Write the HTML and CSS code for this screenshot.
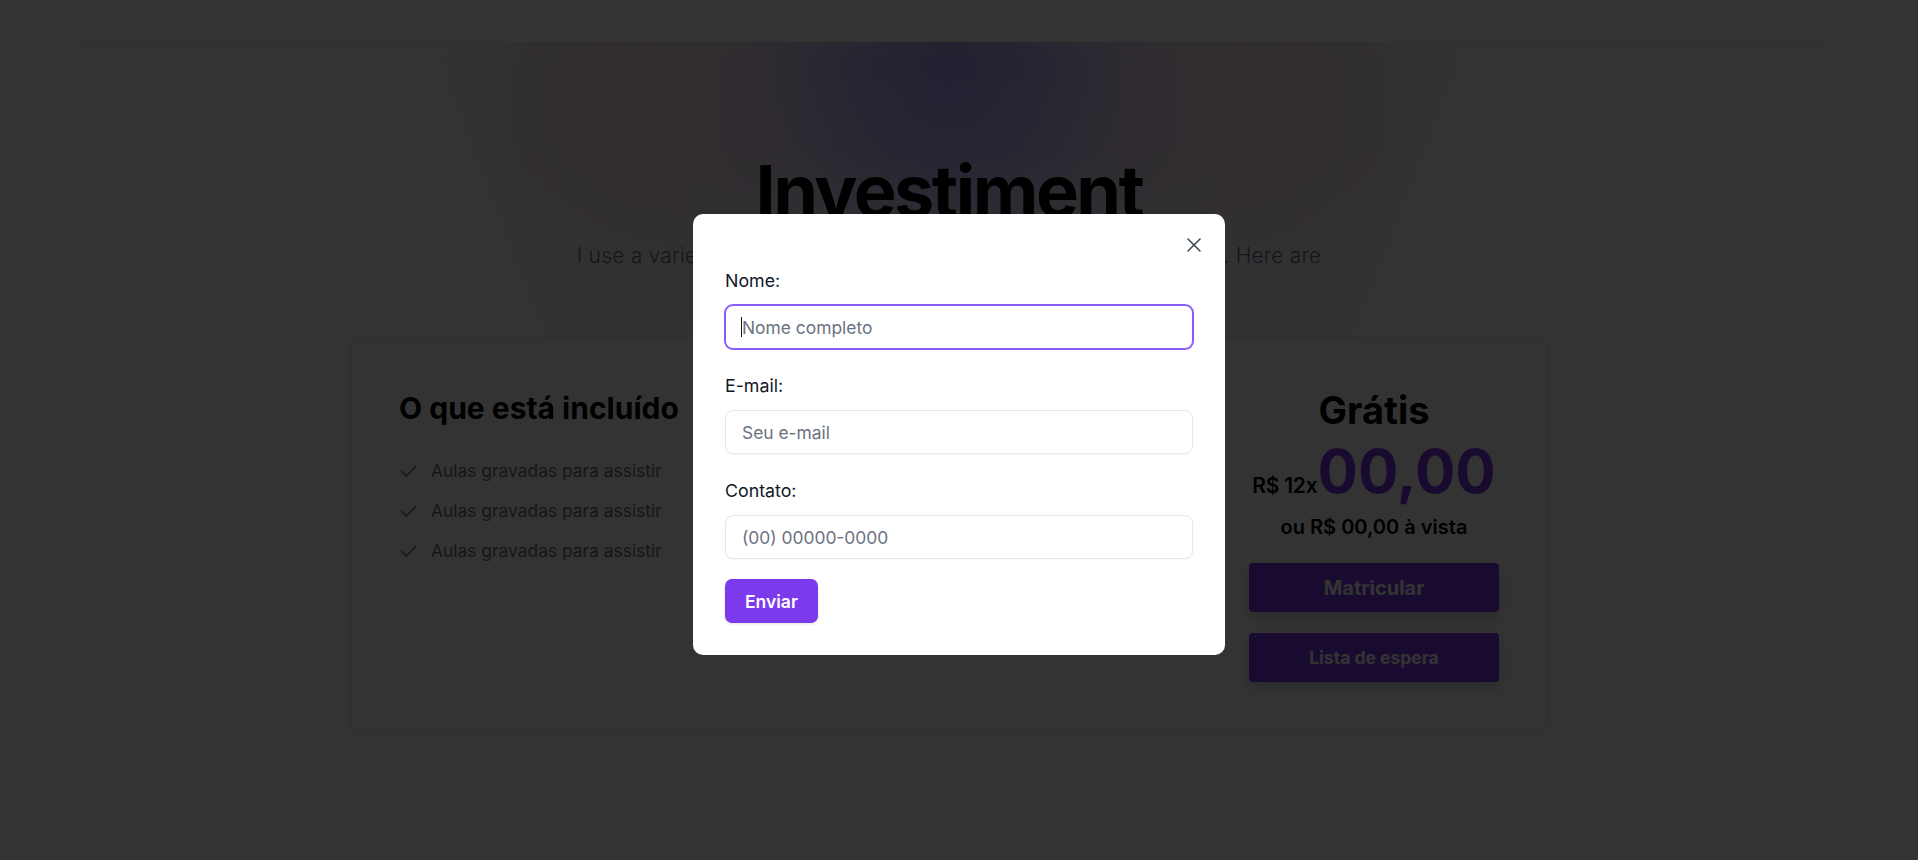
FILE: index.html
```html
<!DOCTYPE html>
<html lang="pt-BR">
<head>
<meta charset="utf-8">
<title>Investiment</title>
<link rel="stylesheet" href="styles.css">
</head>
<body>
<div class="page">
  <header class="topbar"></header>
  <div class="glow" aria-hidden="true"></div>
  <section class="hero">
    <h1 class="hero-title">Investiment</h1>
    <p class="hero-sub">I use a variety of tools and technologies to build my own projects. Here are</p>
  </section>

  <section class="card">
    <div class="included">
      <h2 class="included-title">O que está incluído</h2>
      <ul class="features">
        <li class="feature">
          <svg class="check" width="16" height="12" viewBox="0 0 16 12" fill="none"><polyline points="15,1 5.5,11 1,6.5" stroke="currentColor" stroke-width="1.5" stroke-linecap="round" stroke-linejoin="round"/></svg>
          <span>Aulas gravadas para assistir</span>
        </li>
        <li class="feature">
          <svg class="check" width="16" height="12" viewBox="0 0 16 12" fill="none"><polyline points="15,1 5.5,11 1,6.5" stroke="currentColor" stroke-width="1.5" stroke-linecap="round" stroke-linejoin="round"/></svg>
          <span>Aulas gravadas para assistir</span>
        </li>
        <li class="feature">
          <svg class="check" width="16" height="12" viewBox="0 0 16 12" fill="none"><polyline points="15,1 5.5,11 1,6.5" stroke="currentColor" stroke-width="1.5" stroke-linecap="round" stroke-linejoin="round"/></svg>
          <span>Aulas gravadas para assistir</span>
        </li>
      </ul>
    </div>
    <div class="pricing">
      <div class="plan">Grátis</div>
      <div class="price-row">
        <span class="price-prefix">R$ 12x</span><span class="price">00,00</span>
      </div>
      <div class="price-alt">ou R$ 00,00 à vista</div>
      <button class="btn-primary btn-enroll" type="button">Matricular</button>
      <button class="btn-primary btn-wait" type="button">Lista de espera</button>
    </div>
  </section>
</div>

<div class="overlay">
  <div class="modal" role="dialog">
    <button class="close" type="button" aria-label="Fechar">
      <svg width="24" height="24" viewBox="0 0 24 24" fill="none" stroke="currentColor" stroke-width="1.5" stroke-linecap="round"><path d="M18 6 6 18"/><path d="m6 6 12 12"/></svg>
    </button>
    <form class="form">
      <div class="field">
        <label class="label" for="nome">Nome:</label>
        <div class="input-wrap">
          <input class="input is-focused" id="nome" type="text" placeholder="Nome completo">
          <span class="caret" aria-hidden="true"></span>
        </div>
      </div>
      <div class="field">
        <label class="label" for="email">E-mail:</label>
        <input class="input" id="email" type="email" placeholder="Seu e-mail">
      </div>
      <div class="field">
        <label class="label" for="contato">Contato:</label>
        <input class="input" id="contato" type="tel" placeholder="(00) 00000-0000">
      </div>
      <div class="actions">
        <button class="submit" type="button">Enviar</button>
      </div>
    </form>
  </div>
</div>
</body>
</html>
```

FILE: styles.css
```css
* { box-sizing: border-box; }

html, body {
  margin: 0;
  height: 100%;
  overflow: hidden;
  background: #ffffff;
  font-family: Inter, "Noto Sans", "Liberation Sans", sans-serif;
  color: #111827;
}

/* content is centred as if a scrollbar gutter were present */
.page {
  position: relative;
  margin-right: 20px;
  height: 860px;
}

.topbar {
  width: 1750px;
  height: 42px;
  margin: 0 auto;
  background: #ffffff;
  box-shadow: 0 2px 8px rgba(0, 0, 0, 0.07);
  border-radius: 0 0 10px 10px;
  position: relative;
  z-index: 2;
}

.glow {
  position: absolute;
  top: 34px;
  left: 50%;
  width: 1040px;
  height: 380px;
  margin-left: -520px;
  clip-path: polygon(0 0, 100% 0, 86% 100%, 14% 100%);
  background:
    radial-gradient(ellipse 20% 65% at 50% 0%, rgba(120, 100, 240, 0.55) 0%, rgba(120, 100, 240, 0) 100%),
    linear-gradient(to right,
      rgba(236, 160, 200, 0) 0%,
      rgba(236, 160, 200, 0.20) 8%,
      rgba(236, 160, 200, 0.30) 18%,
      rgba(210, 170, 235, 0.42) 34%,
      rgba(185, 165, 250, 0.50) 50%,
      rgba(210, 170, 235, 0.42) 66%,
      rgba(236, 160, 200, 0.30) 82%,
      rgba(236, 160, 200, 0.20) 92%,
      rgba(236, 160, 200, 0) 100%);
  -webkit-mask-image: linear-gradient(to bottom, #000 30%, transparent 95%);
  mask-image: linear-gradient(to bottom, #000 30%, transparent 95%);
  filter: blur(12px);
  z-index: 0;
}

.hero {
  position: relative;
  z-index: 1;
  padding-top: 113px;
  text-align: center;
}

.hero-title {
  margin: 0;
  font-size: 72px;
  line-height: 1;
  font-weight: 700;
  letter-spacing: -0.035em;
  color: #000;
}

.hero-sub {
  margin: 15px 0 0;
  font-size: 21px;
  line-height: 28px;
  font-weight: 300;
  letter-spacing: 0.01em;
  color: #6b7280;
  white-space: nowrap;
}

.card {
  position: relative;
  z-index: 1;
  width: 1198px;
  height: 396px;
  margin: 67px auto 0;
  padding: 52px 48px 50px;
  border: 1px solid #e5e7eb;
  border-radius: 10px;
  background: #fff;
  display: flex;
  justify-content: space-between;
  align-items: flex-start;
}

.included-title {
  margin: 0;
  font-size: 30px;
  line-height: 36px;
  font-weight: 700;
  color: #000;
}

.features {
  list-style: none;
  margin: 31px 0 0;
  padding: 0;
  display: flex;
  flex-direction: column;
  gap: 12px;
}

.feature {
  display: flex;
  align-items: center;
  gap: 14px;
  font-size: 17.4px;
  line-height: 28px;
  color: #6b7280;
}

.check {
  flex: none;
  margin-left: 2px;
  color: #6b7280;
}

.pricing {
  width: 250px;
  display: flex;
  flex-direction: column;
  align-items: stretch;
  text-align: center;
}

.plan {
  font-size: 38px;
  line-height: 40px;
  font-weight: 700;
  color: #000;
}

.price-row {
  margin-top: 11px;
  display: flex;
  justify-content: center;
  align-items: baseline;
  white-space: nowrap;
}

.price-prefix {
  font-size: 21px;
  font-weight: 600;
  color: #000;
  letter-spacing: -0.01em;
}

.price {
  font-size: 60px;
  line-height: 60px;
  font-weight: 700;
  color: #7c3aed;
}

.price-alt {
  margin-top: 12px;
  font-size: 20px;
  line-height: 28px;
  font-weight: 600;
  color: #000;
}

.btn-primary {
  height: 49px;
  border: 0;
  border-radius: 4px;
  background: #7c3aed;
  color: #fff;
  font-family: inherit;
  font-weight: 700;
  box-shadow: 0 6px 14px rgba(0, 0, 0, 0.18);
}

.btn-enroll {
  margin-top: 22px;
  font-size: 20px;
}

.btn-wait {
  margin-top: 21px;
  font-size: 17.5px;
}

/* modal */
.overlay {
  position: fixed;
  inset: 0;
  z-index: 10;
  background: rgba(0, 0, 0, 0.8);
  display: flex;
  align-items: center;
  justify-content: center;
  padding-top: 9px;
}

.modal {
  position: relative;
  width: 532px;
  padding: 55px 32px 32px;
  background: #fff;
  border-radius: 10px;
}

.close {
  position: absolute;
  top: 19px;
  right: 19px;
  width: 24px;
  height: 24px;
  padding: 0;
  border: 0;
  background: none;
  color: #374151;
  display: flex;
}

.form {
  display: flex;
  flex-direction: column;
  gap: 25px;
}

.field {
  display: flex;
  flex-direction: column;
  gap: 12px;
}

.label {
  font-size: 17.8px;
  line-height: 24px;
  color: #111827;
}

.input-wrap {
  position: relative;
}

.input {
  display: block;
  height: 44px;
  width: 100%;
  padding: 0 16px;
  border: 1px solid #e5e7eb;
  border-radius: 8px;
  font-family: inherit;
  font-size: 17.4px;
  color: #111827;
  background: #fff;
  box-shadow: 0 1px 2px rgba(0, 0, 0, 0.04);
  outline: none;
}

.input::placeholder {
  color: #6b7280;
}

.input.is-focused,
.input:focus {
  border-color: #8b5cf6;
  box-shadow: 0 0 0 1px #8b5cf6;
}

.caret {
  position: absolute;
  left: 16px;
  top: 12px;
  width: 1px;
  height: 20px;
  background: #111827;
}

.actions {
  margin-top: -5px;
  display: flex;
}

.submit {
  height: 44px;
  padding: 0 20px;
  border: 0;
  border-radius: 7px;
  background: #7c3aed;
  color: #fff;
  font-family: inherit;
  font-size: 17.5px;
  font-weight: 600;
  box-shadow: 0 1px 3px rgba(0, 0, 0, 0.12);
}
```
